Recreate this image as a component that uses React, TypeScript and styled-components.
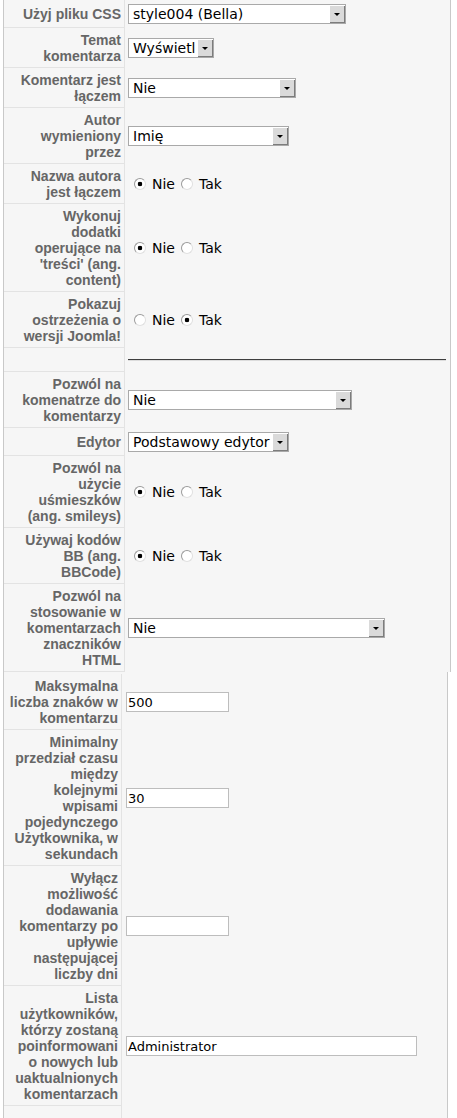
import React from 'react';
import styled, { createGlobalStyle } from 'styled-components';

const GlobalStyle = createGlobalStyle`
  html, body {
    margin: 0;
    padding: 0;
    background: #fff;
    overflow: hidden;
  }
`;

const Page = styled.div`
  padding-left: 3px;
`;

const Panel = styled.div<{ $width: number; $keyWidth: number; $padTop: number }>`
  display: grid;
  grid-template-columns: ${(p) => p.$keyWidth}px 1fr;
  width: ${(p) => p.$width}px;
  box-sizing: border-box;
  padding-top: ${(p) => p.$padTop}px;
  border-left: 1px solid #c9c9c9;
  border-right: 1px solid #c9c9c9;
  background: #f6f6f6;
`;

const Key = styled.div<{ $padLeft: number; $minHeight?: number }>`
  display: flex;
  align-items: center;
  justify-content: flex-end;
  box-sizing: border-box;
  min-height: ${(p) => p.$minHeight ?? 0}px;
  padding: 4px 3px 3px ${(p) => p.$padLeft}px;
  border-right: 1px solid #e3e3e3;
  border-bottom: 1px solid #e3e3e3;
  text-align: right;
  font: bold 14px/16px 'Liberation Sans', Arial, sans-serif;
  color: #666;
`;

const Value = styled.div<{ $padLeft: number }>`
  display: flex;
  align-items: center;
  min-width: 0;
  padding: 4px 4px 4px ${(p) => p.$padLeft}px;
  font: 14px/16px 'DejaVu Sans', Tahoma, sans-serif;
  color: #000;
`;

const SelectBox = styled.span<{ $width: number }>`
  display: inline-flex;
  box-sizing: border-box;
  width: ${(p) => p.$width}px;
  height: 20px;
  border: 1px solid #a9a9a9;
  background: #fff;
`;

const NativeSelect = styled.select`
  appearance: none;
  flex: 1;
  min-width: 0;
  height: 100%;
  margin: 0;
  border: 0;
  padding: 0 0 0 4px;
  background: transparent;
  font: 14px 'DejaVu Sans', Tahoma, sans-serif;
  color: #000;
  outline: none;
`;

const ArrowButton = styled.span`
  flex: none;
  display: flex;
  align-items: center;
  justify-content: center;
  width: 16px;
  background: #dadada;
  box-shadow: inset 1px 1px #fff, inset -1px -1px #7c7c7c;

  &::after {
    content: '';
    border-left: 3px solid transparent;
    border-right: 3px solid transparent;
    border-top: 3px solid #000;
  }
`;

const RadioLabel = styled.label`
  display: inline-flex;
  align-items: center;
  font: 14px/16px 'DejaVu Sans', Tahoma, sans-serif;
  color: #000;
`;

const Radio = styled.input.attrs({ type: 'radio' })`
  appearance: none;
  box-sizing: border-box;
  width: 12px;
  height: 12px;
  margin: 0 6px;
  border-radius: 50%;
  border: 1px solid;
  border-color: #9a9a9a #e0e0e0 #e0e0e0 #9a9a9a;
  background: #fff;

  &:checked {
    background: radial-gradient(circle, #000 0 2px, #fff 2.6px);
  }
`;

const TextInput = styled.input<{ $width: number }>`
  box-sizing: border-box;
  width: ${(p) => p.$width}px;
  height: 20px;
  margin: 0;
  padding: 0 1px;
  border: 1px solid #bdbdbd;
  background: #fff;
  font: 13px 'DejaVu Sans', Tahoma, sans-serif;
  color: #000;
  outline: none;
`;

const Divider = styled.hr`
  flex: 1;
  height: 0;
  margin: 7px 0;
  border: 0;
  border-top: 1px solid #3e3e3e;
  border-bottom: 1px solid #dcdcdc;
`;

type Row =
  | { label: string; kind: 'select'; value: string; width: number }
  | { label: string; kind: 'radio'; name: string; checked: 'Nie' | 'Tak' }
  | { label: string; kind: 'input'; value: string; width: number }
  | { label: string; kind: 'hr' }
  | { label: string; kind: 'empty' };

const topRows: Row[] = [
  { label: 'Użyj pliku CSS', kind: 'select', value: 'style004 (Bella)', width: 218 },
  { label: 'Temat komentarza', kind: 'select', value: 'Wyświetl', width: 86 },
  { label: 'Komentarz jest łączem', kind: 'select', value: 'Nie', width: 168 },
  { label: 'Autor wymieniony przez', kind: 'select', value: 'Imię', width: 161 },
  { label: 'Nazwa autora jest łączem', kind: 'radio', name: 'authorlink', checked: 'Nie' },
  { label: "Wykonuj dodatki operujące na 'treści' (ang. content)", kind: 'radio', name: 'plugins', checked: 'Nie' },
  { label: 'Pokazuj ostrzeżenia o wersji Joomla!', kind: 'radio', name: 'warn', checked: 'Tak' },
  { label: '', kind: 'hr' },
  { label: 'Pozwól na komenatrze do komentarzy', kind: 'select', value: 'Nie', width: 224 },
  { label: 'Edytor', kind: 'select', value: 'Podstawowy edytor', width: 161 },
  { label: 'Pozwól na użycie uśmieszków (ang. smileys)', kind: 'radio', name: 'smileys', checked: 'Nie' },
  { label: 'Używaj kodów BB (ang. BBCode)', kind: 'radio', name: 'bbcode', checked: 'Nie' },
  { label: 'Pozwól na stosowanie w komentarzach znaczników HTML', kind: 'select', value: 'Nie', width: 257 },
];

const bottomRows: Row[] = [
  { label: 'Maksymalna liczba znaków w komentarzu', kind: 'input', value: '500', width: 103 },
  {
    label: 'Minimalny przedział czasu między kolejnymi wpisami pojedynczego Użytkownika, w sekundach',
    kind: 'input',
    value: '30',
    width: 103,
  },
  {
    label: 'Wyłącz możliwość dodawania komentarzy po upływie następującej liczby dni',
    kind: 'input',
    value: '',
    width: 103,
  },
  {
    label: 'Lista użytkowników, którzy zostaną poinformowani o nowych lub uaktualnionych komentarzach',
    kind: 'input',
    value: 'Administrator',
    width: 291,
  },
  { label: '', kind: 'empty' },
];

const Field = ({ row }: { row: Row }) => {
  switch (row.kind) {
    case 'select':
      return (
        <SelectBox $width={row.width}>
          <NativeSelect defaultValue={row.value}>
            <option>{row.value}</option>
          </NativeSelect>
          <ArrowButton />
        </SelectBox>
      );
    case 'radio':
      return (
        <>
          {(['Nie', 'Tak'] as const).map((opt) => (
            <RadioLabel key={opt}>
              <Radio name={row.name} defaultChecked={row.checked === opt} />
              {opt}
            </RadioLabel>
          ))}
        </>
      );
    case 'input':
      return <TextInput $width={row.width} defaultValue={row.value} />;
    case 'hr':
      return <Divider />;
    default:
      return null;
  }
};

const ParamTable = ({
  rows,
  width,
  keyWidth,
  keyPad,
  valuePad,
  padTop = 0,
}: {
  rows: Row[];
  width: number;
  keyWidth: number;
  keyPad: number;
  valuePad: number;
  padTop?: number;
}) => (
  <Panel $width={width} $keyWidth={keyWidth} $padTop={padTop}>
    {rows.map((row, i) => (
      <React.Fragment key={i}>
        <Key $padLeft={keyPad} $minHeight={row.kind === 'empty' ? 40 : 0}>
          {row.label}
        </Key>
        <Value $padLeft={valuePad}>
          <Field row={row} />
        </Value>
      </React.Fragment>
    ))}
  </Panel>
);

export default function App() {
  return (
    <>
      <GlobalStyle />
      <Page>
        <ParamTable rows={topRows} width={448} keyWidth={121} keyPad={10} valuePad={3} />
        <ParamTable rows={bottomRows} width={445} keyWidth={118} keyPad={3} valuePad={4} padTop={2} />
      </Page>
    </>
  );
}
